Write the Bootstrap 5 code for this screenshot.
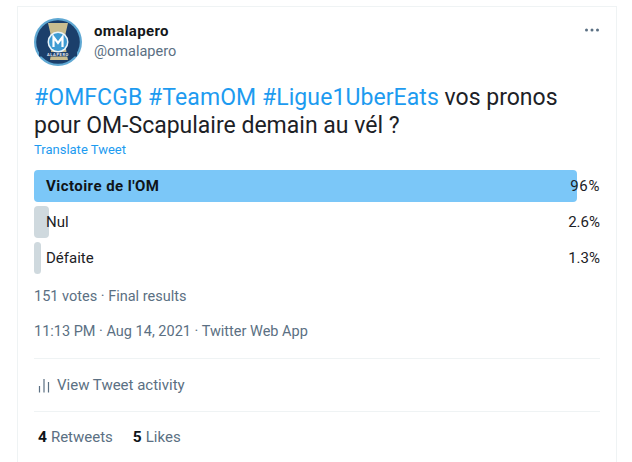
<!DOCTYPE html>
<html lang="en">
<head>
<meta charset="utf-8">
<title>Tweet</title>
<link rel="stylesheet" href="https://cdn.jsdelivr.net/npm/bootstrap@5.3.0/dist/css/bootstrap.min.css">
<style>
html,body{height:100%;overflow:hidden}
body{background:#fff;font-family:"Roboto","Liberation Sans",sans-serif;color:#0f1419;font-size:15px;padding:6px 15px 0 17px}
.tw-box{border:1px solid #eff3f4;border-bottom:0;height:456px;padding:11px 16px 0 16px}
.tw-head{height:48px;margin-bottom:18px}
.tw-avatar{width:48px;height:48px;flex:none;margin-right:12px;display:block}
.tw-name{font-weight:700;font-size:15px;letter-spacing:.35px;line-height:20px;margin-top:3px;color:#14171a}
.tw-handle{color:#5b7083;font-size:14.5px;line-height:20px;margin-top:1px}
.tw-more{width:16px;height:4px;display:block;margin-top:10px}
.tw-text{font-size:23px;line-height:28px;margin:0;color:#1c2126}
.tw-blue{color:#1d9bf0;letter-spacing:.08px}
.tw-trans{font-size:13px;line-height:16px;color:#1d9bf0;margin-top:2px;margin-bottom:12px}
.tw-poll{display:flex;flex-direction:column;gap:4px}
.tw-opt{height:32px;display:flex;align-items:center;justify-content:space-between;position:relative;font-size:15px;color:#1c2126}
.tw-fill{position:absolute;left:0;top:0;bottom:0;border-radius:4px;background:#cfd9de}
.tw-fill.tw-win{background:#7bc7f8}
.tw-opt span{position:relative}
.tw-label{padding-left:12px}
.tw-strong{font-weight:700;letter-spacing:.45px;color:#0f1419}
.tw-pct{letter-spacing:.6px}
.tw-meta{color:#5b7083;font-size:14.5px;line-height:20px}
.tw-votes{margin-top:13px}
.tw-time{margin-top:15px;padding-bottom:16px;border-bottom:1px solid #eff3f4}
.tw-activity{height:53px;border-bottom:1px solid #eff3f4;padding-left:4px;color:#5b7083;gap:6px}
.tw-activity svg{width:13px;height:15px;display:block}
.tw-stats{height:52px;padding-left:4px;gap:20px;font-size:15px;color:#5b7083}
.tw-stats b{color:#0f1419;font-weight:700;margin-right:4px;font-size:15.5px}
</style>
</head>
<body>
<div class="tw-box">
  <div class="d-flex tw-head">
    <svg class="tw-avatar" viewBox="0 0 48 48" role="img" aria-label="omalapero">
      <circle cx="24" cy="24" r="24" fill="#5fa8d3"/>
      <circle cx="24" cy="24" r="21.800" fill="#1b3f6b"/>
      <path d="M17 5h20l-3 13c0 8 1 14 3 24H19c2-10 1-16 1-24z" fill="#c9bd8f" transform="translate(-3 0)"/>
      <rect x="5" y="34" width="38" height="4.500" fill="#1b3f6b"/>
      <circle cx="24" cy="24" r="10.500" fill="#eaf4fa"/>
      <circle cx="24" cy="24" r="9" fill="#3e9bd2"/>
      <path d="M19.500 29V19l4.500 6 4.500-6v10" fill="none" stroke="#fff" stroke-width="2.200"/>
      <text x="24" y="38" text-anchor="middle" font-size="4" font-weight="700" letter-spacing=".6" fill="#e6edf2" font-family="Roboto, sans-serif">ALAPERO</text>
    </svg>
    <div class="flex-grow-1">
      <div class="tw-name">omalapero</div>
      <div class="tw-handle">@omalapero</div>
    </div>
    <svg class="tw-more" viewBox="0 0 16 4"><circle cx="2.500" cy="2" r="1.500" fill="#5b7083"/><circle cx="8" cy="2" r="1.500" fill="#5b7083"/><circle cx="13.500" cy="2" r="1.500" fill="#5b7083"/></svg>
  </div>
  <p class="tw-text"><span class="tw-blue">#OMFCGB #TeamOM #Ligue1UberEats</span> vos pronos<br>pour OM-Scapulaire demain au vél ?</p>
  <div class="tw-trans">Translate Tweet</div>
  <div class="tw-poll">
    <div class="tw-opt"><div class="tw-fill tw-win" style="width:96%"></div><span class="tw-label tw-strong">Victoire de l'OM</span><span class="tw-pct">96%</span></div>
    <div class="tw-opt"><div class="tw-fill" style="width:2.6%"></div><span class="tw-label">Nul</span><span>2.6%</span></div>
    <div class="tw-opt"><div class="tw-fill" style="width:1.3%"></div><span class="tw-label">Défaite</span><span>1.3%</span></div>
  </div>
  <div class="tw-meta tw-votes">151 votes · Final results</div>
  <div class="tw-meta tw-time">11:13 PM · Aug 14, 2021 · Twitter Web App</div>
  <div class="d-flex align-items-center tw-activity">
    <svg viewBox="0 0 13 15"><path d="M1.500 8v6.500M6 1v13.500M10.500 4v10.500" stroke="#5b7083" stroke-width="1.200" fill="none"/></svg>
    <span>View Tweet activity</span>
  </div>
  <div class="d-flex align-items-center tw-stats">
    <span><b>4</b>Retweets</span><span><b>5</b>Likes</span>
  </div>
</div>
<script src="https://cdn.jsdelivr.net/npm/bootstrap@5.3.0/dist/js/bootstrap.bundle.min.js"></script>
</body>
</html>
